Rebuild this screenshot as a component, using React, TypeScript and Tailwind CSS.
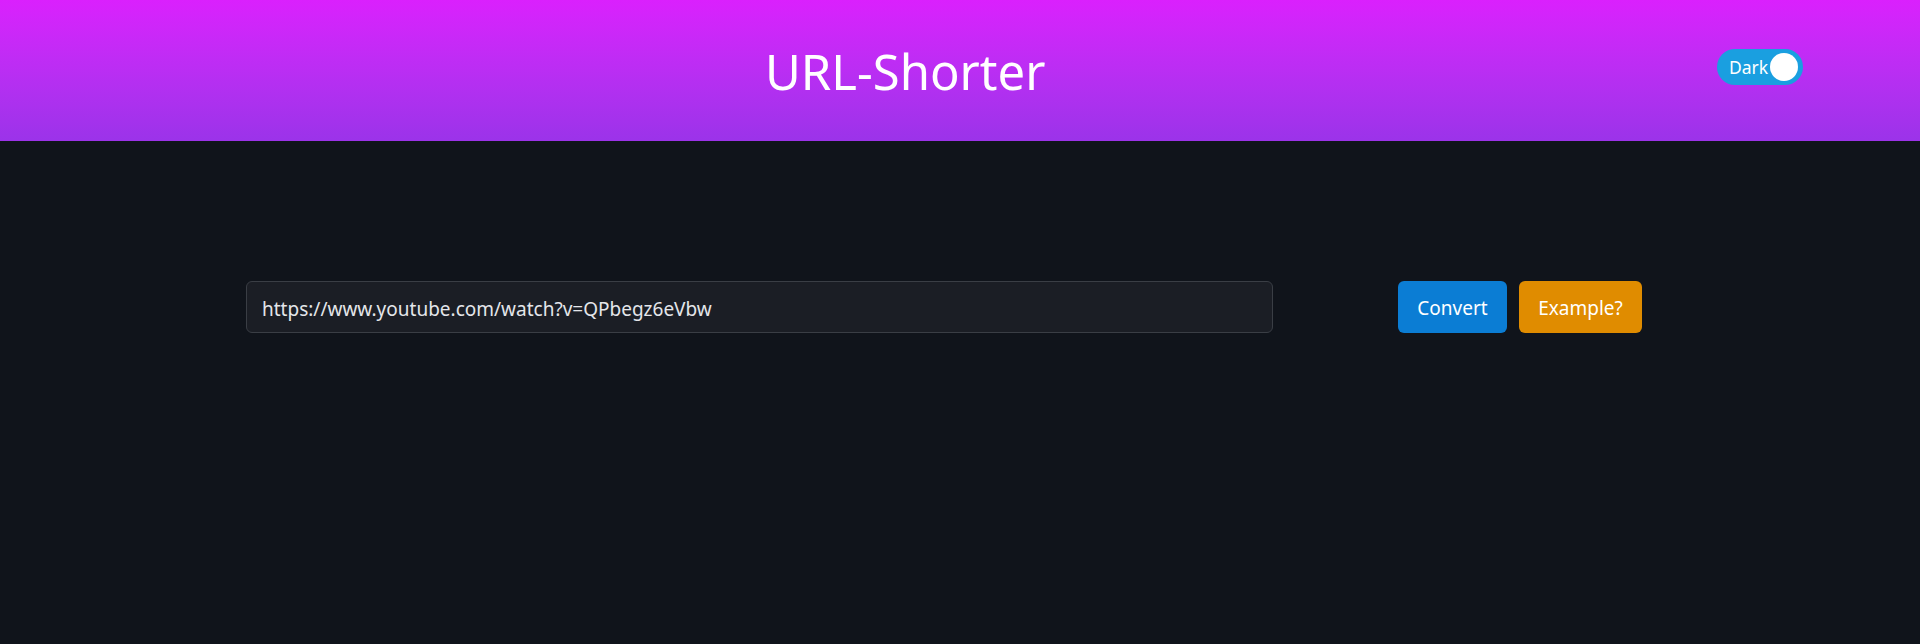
import { useState } from 'react';

const Header = () => {
  const [dark, setDark] = useState(true);

  return (
    <header className="flex h-[141px] items-center bg-gradient-to-b from-[#da20fd] to-[#9b33e9]">
      {/* Title */}
      <h1 className="ml-[765px] pt-[2px] text-[49px] leading-none font-normal text-white">
        URL-Shorter
      </h1>

      {/* Theme toggle */}
      <button
        onClick={() => setDark(!dark)}
        className="mr-[117px] mb-[7px] ml-auto flex h-[36px] w-[86px] items-center justify-between rounded-full bg-[#1a9fe0] pr-[5px] pl-[12px] text-[17.5px] text-white"
      >
        <span>{dark ? 'Dark' : 'Light'}</span>
        <span className="h-[28px] w-[28px] rounded-full bg-white" />
      </button>
    </header>
  );
};

export default function App() {
  const [url, setUrl] = useState('https://www.youtube.com/watch?v=QPbegz6eVbw');

  return (
    <div
      className="min-h-[644px] bg-[#10141b]"
      style={{ fontFamily: '"Segoe UI", "Noto Sans", "Open Sans", sans-serif' }}
    >
      <Header />

      <main className="flex items-center pt-[140px] pl-[246px]">
        <input
          value={url}
          onChange={(e) => setUrl(e.target.value)}
          className="h-[52px] w-[1027px] rounded-md border border-[#3a3e45] bg-[#1b1e25] px-[15px] pt-[3px] text-[19px] text-[#e4e6ea] outline-none"
        />

        <div className="ml-[125px] flex gap-[12px]">
          <button className="h-[52px] w-[109px] rounded-md bg-[#0b7dd4] pt-[3px] text-[19px] text-white">
            Convert
          </button>
          <button className="h-[52px] w-[123px] rounded-md bg-[#e08c00] pt-[3px] text-[19px] text-white">
            Example?
          </button>
        </div>
      </main>
    </div>
  );
}
